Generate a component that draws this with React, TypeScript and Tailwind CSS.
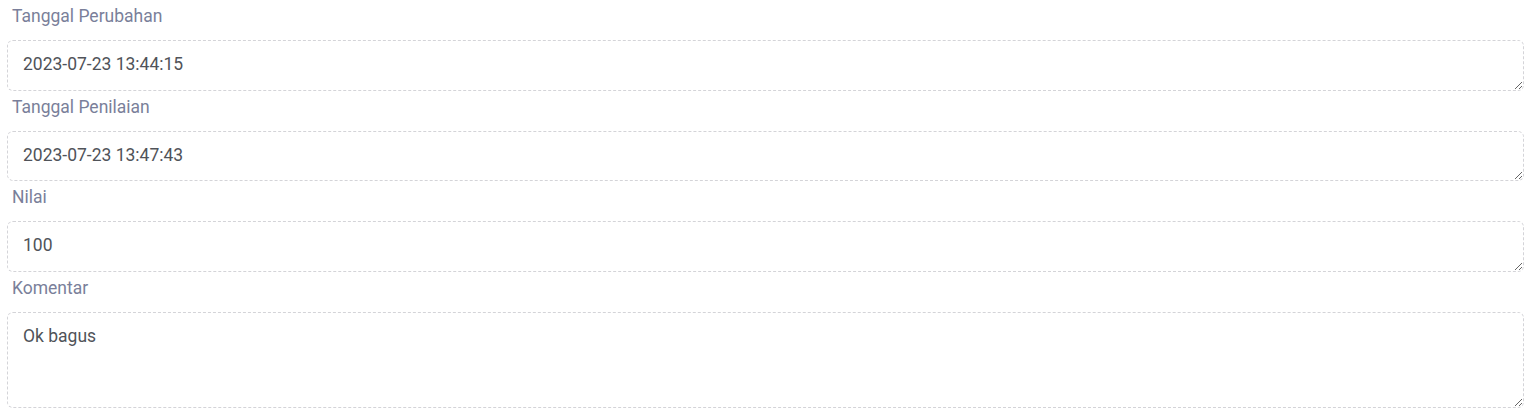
const fields = [
  { label: "Tanggal Perubahan", value: "2023-07-23 13:44:15", tall: false },
  { label: "Tanggal Penilaian", value: "2023-07-23 13:47:43", tall: false },
  { label: "Nilai", value: "100", tall: false },
  { label: "Komentar", value: "Ok bagus", tall: true },
];

export default function App() {
  return (
    <div className="min-h-screen bg-white pl-[7px] pr-[11px] font-['Roboto',sans-serif]">
      {fields.map((f) => (
        <div key={f.label} className="flex flex-col">
          <label className="h-[40px] pt-[3px] pl-[5px] text-[17.5px] leading-[26px] text-[#7a7f9a]">
            {f.label}
          </label>
          <textarea
            readOnly
            defaultValue={f.value}
            className={
              f.tall
                ? "h-[96px] w-full rounded-md border border-dashed border-[#d4d4d8] bg-white px-[15px] pt-[10px] text-[17.5px] leading-[26px] text-[#505359] outline-none"
                : "h-[50.67px] w-full rounded-md border border-dashed border-[#d4d4d8] bg-white px-[15px] pt-[10px] text-[17.5px] leading-[26px] text-[#505359] outline-none"
            }
          />
        </div>
      ))}
    </div>
  );
}
